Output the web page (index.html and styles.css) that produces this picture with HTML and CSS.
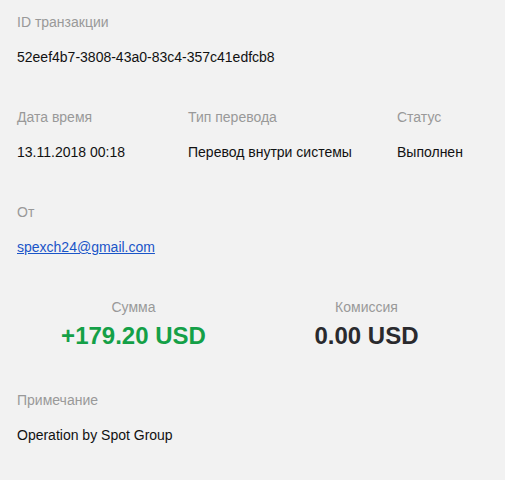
FILE: index.html
```html
<!DOCTYPE html>
<html lang="ru">
<head>
    <meta charset="UTF-8">
    <meta name="viewport" content="width=device-width, initial-scale=1.0">
    <title>Транзакция</title>
    <link rel="stylesheet" href="styles.css">
</head>
<body>
    <div class="details">
        <div class="section">
            <div class="label">ID транзакции</div>
            <div class="value">52eef4b7-3808-43a0-83c4-357c41edfcb8</div>
        </div>

        <div class="section row">
            <div class="field">
                <div class="label">Дата время</div>
                <div class="value">13.11.2018 00:18</div>
            </div>
            <div class="field">
                <div class="label">Тип перевода</div>
                <div class="value">Перевод внутри системы</div>
            </div>
            <div class="field">
                <div class="label">Статус</div>
                <div class="value">Выполнен</div>
            </div>
        </div>

        <div class="section">
            <div class="label">От</div>
            <div class="value"><a href="#">spexch24@gmail.com</a></div>
        </div>

        <div class="section sums">
            <div class="sum">
                <div class="label">Сумма</div>
                <div class="amount plus">+179.20 USD</div>
            </div>
            <div class="sum">
                <div class="label">Комиссия</div>
                <div class="amount">0.00 USD</div>
            </div>
        </div>

        <div class="section">
            <div class="label">Примечание</div>
            <div class="value">Operation by Spot Group</div>
        </div>
    </div>
</body>
</html>
```

FILE: styles.css
```css
body {
    margin: 0;
    background-color: #f2f2f2;
    font-family: "Liberation Sans", Arial, sans-serif;
    font-size: 14px;
    color: #111;
}

.details {
    padding: 12px 17px;
    display: flex;
    flex-direction: column;
    gap: 40px;
}

.label {
    color: #999;
    line-height: 20px;
    margin-bottom: 15px;
}

.value {
    line-height: 20px;
}

.value a {
    color: #1a55c8;
}

.row {
    display: grid;
    grid-template-columns: 171px 209px 1fr;
}

.sums {
    display: grid;
    grid-template-columns: 233px 233px;
    text-align: center;
}

.sums .label {
    margin-bottom: 5px;
}

.amount {
    font-size: 24px;
    font-weight: bold;
    line-height: 28px;
    color: #2a2a2e;
}

.amount.plus {
    color: #14a047;
}
```
